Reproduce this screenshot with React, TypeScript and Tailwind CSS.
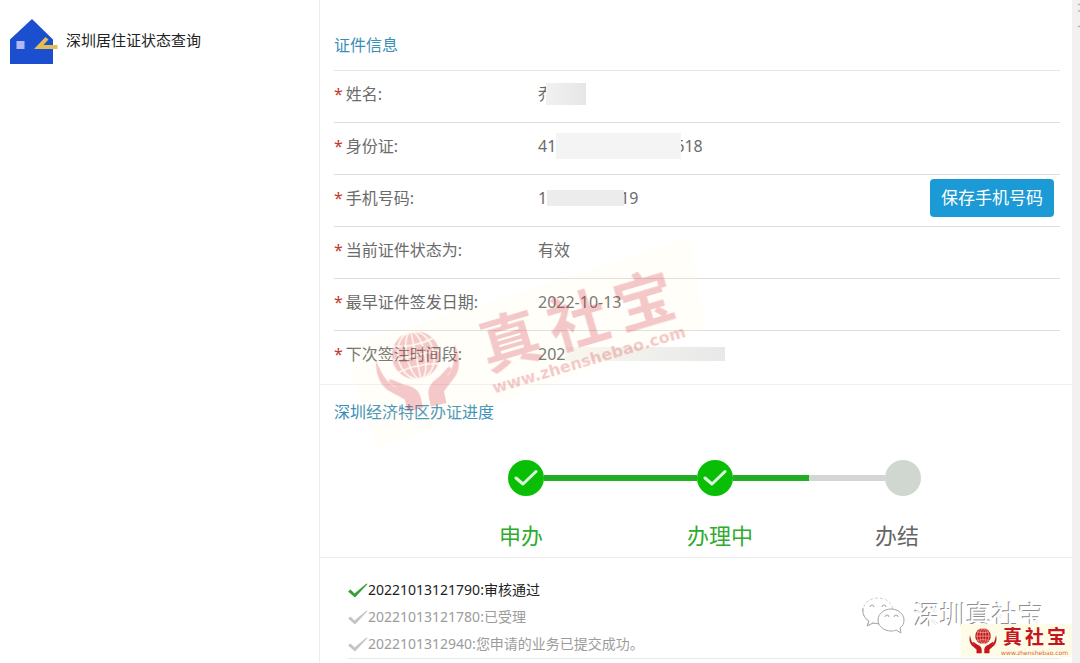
import type { ReactNode } from 'react';
import clsx from 'clsx';

type Field = {
  label: string;
  value: ReactNode;
  action?: ReactNode;
};

type LogEntry = {
  id: string;
  message: string;
};

const logs: LogEntry[] = [
  { id: '20221013121790', message: '审核通过' },
  { id: '20221013121780', message: '已受理' },
  { id: '2022101312940', message: '您申请的业务已提交成功。' },
];

const steps = [
  { name: '申办', done: true },
  { name: '办理中', done: true },
  { name: '办结', done: false },
];

const fields: Field[] = [
  {
    label: '姓名',
    value: (
      <>
        乔
        <Mask className="-ml-2 h-[22px] w-10 bg-gradient-to-r from-[#f1f1f1] to-[#e6e6e6]" />
      </>
    ),
  },
  {
    label: '身份证',
    value: (
      <>
        41
        <Mask className="z-10 -mr-1.5 h-[26px] w-[125px] bg-[#f4f4f4]" />
        618
      </>
    ),
  },
  {
    label: '手机号码',
    value: (
      <>
        1
        <Mask className="z-10 -mr-1 h-4 w-[77px] bg-[#ececec]" />
        19
      </>
    ),
    action: (
      <button
        type="button"
        className="mr-1.5 h-[38px] rounded bg-[#1b9ad6] px-[11px] text-[17px] leading-none text-white"
      >
        保存手机号码
      </button>
    ),
  },
  { label: '当前证件状态为', value: '有效' },
  { label: '最早证件签发日期', value: '2022-10-13' },
  {
    label: '下次签注时间段',
    value: (
      <>
        202
        <Mask className="h-3.5 w-40 bg-gradient-to-r from-[#f8f7f2] to-[#e8e8e8]" />
      </>
    ),
  },
];

export default function App() {
  return (
    <div className="flex min-h-screen bg-white font-['Noto_Sans','Noto_Sans_CJK_SC',sans-serif]">
      <aside className="w-80 shrink-0 border-r border-[#ececec] pt-[17px] pl-2.5">
        <a href="#status" className="flex items-start gap-2 text-[15px] leading-6 text-[#222]">
          <HouseIcon />
          <span className="mt-[11px]">深圳居住证状态查询</span>
        </a>
      </aside>

      <main className="relative min-w-0 flex-1">
        <section className="border-b border-[#f0f0f0] pt-5 pr-3 pb-px pl-3.5">
          <h2 className="flex h-[51px] items-center border-b border-[#e6e6e6] text-base text-[#3a8fb7]">证件信息</h2>
          <dl>
            {fields.map((f) => (
              <div
                key={f.label}
                className="flex h-[52px] items-center border-b border-[#dedede] pb-1.5 text-base text-[#6b6b6b] last:border-b-0"
              >
                <dt className="w-[204px] shrink-0">
                  <span className="mr-[3px] text-[#c0392b]">*</span>
                  {f.label}:
                </dt>
                <dd className="flex flex-1 items-center">{f.value}</dd>
                {f.action}
              </div>
            ))}
          </dl>
        </section>

        <section className="border-b border-[#ececec] pt-[15px] pb-1.5">
          <h2 className="pl-3.5 text-base leading-6 text-[#3a8fb7]">深圳经济特区办证进度</h2>
          <div className="mt-9 flex items-center pl-[188px]">
            <StepDot done />
            <span className="h-1.5 w-[153px] bg-[#22ae22]" />
            <StepDot done />
            <span className="h-1.5 w-[76px] bg-[#22ae22]" />
            <span className="h-1.5 w-[76px] bg-[#d3d6d2]" />
            <StepDot done={false} />
          </div>
          <ol className="mt-[23px] flex pl-[179px] text-[22px] leading-8">
            {steps.map((s) => (
              <li key={s.name} className={clsx('w-[188px]', s.done ? 'text-[#2fab2f]' : 'text-[#666]')}>
                {s.name}
              </li>
            ))}
          </ol>
        </section>

        <section className="pt-[18px] pr-3 pl-7">
          <ul className="border-b border-[#e8e8e8] pb-px text-sm">
            {logs.map((log, i) => (
              <li
                key={log.id}
                className={clsx('flex h-[27px] items-center', i === 0 ? 'text-[#222]' : 'text-[#9c9c9c]')}
              >
                <TickIcon className={i === 0 ? 'text-[#35a03a]' : 'text-[#c4c4c4]'} />
                {log.id}:{log.message}
              </li>
            ))}
          </ul>
        </section>

        <Watermark />
        <div className="pointer-events-none absolute right-7 bottom-7 flex items-center gap-2">
          <WechatIcon />
          <span className="text-[26px] leading-10 text-white [text-shadow:-1px_-1px_0_#8d8d8d]">深圳真社宝</span>
        </div>
        <BrandBadge />
      </main>

      <div className="w-2 shrink-0 bg-[#f1f1f1]">
        <svg width="8" height="30" viewBox="0 0 8 30" fill="none" stroke="#999">
          <path d="M6 5l2-1M6 11h2M6 27l2-1" />
        </svg>
      </div>
    </div>
  );
}

function Mask({ className }: { className: string }) {
  return <span className={clsx('relative inline-block shrink-0', className)} />;
}

function StepDot({ done }: { done: boolean }) {
  return (
    <span
      className={clsx('flex size-9 shrink-0 items-center justify-center rounded-full', done ? 'bg-[#09bf06]' : 'bg-[#d0d7d0]')}
    >
      {done && (
        <svg width="24" height="18" viewBox="0 0 24 18" fill="none" stroke="#dcf8dc" strokeWidth="3">
          <path d="M2 9l7 6L22 2.500" strokeLinecap="round" strokeLinejoin="round" />
        </svg>
      )}
    </span>
  );
}

function TickIcon({ className }: { className: string }) {
  return (
    <svg width="20" height="16" viewBox="0 0 20 16" className={clsx('shrink-0', className)} fill="currentColor">
      <path d="M0 9.500L2.500 7.500L6.500 11.500L18.500 1.500L19.500 2L7 15.500Z" />
    </svg>
  );
}

function HouseIcon() {
  return (
    <svg width="48" height="48" viewBox="0 0 48 48" className="shrink-0">
      <path d="M22 2L43 22.500V47H0V22.500Z" fill="#1b4fd0" />
      <rect x="6.500" y="24" width="8" height="8" fill="#b0b9f5" />
      <path d="M24 32L35.500 20L38.500 22.500L33.500 28H47.500V32Z" fill="#e3bd55" />
    </svg>
  );
}

function WechatIcon() {
  return (
    <svg width="44" height="38" viewBox="0 0 44 38" fill="#fff" stroke="#a5a5a5" strokeWidth="1">
      <path
        d="M16 2C7 2 1 8 1 15c0 4 2 8 6 10l-2 5 6-3c2 .6 4 1 6 .8C26 27 31 21 31 15 31 8 25 2 16 2Z"
        strokeDasharray="3 2"
        stroke="#d0d0d0"
      />
      <path d="M1 12c-1 6 2 11 6 13l-2 5 6-3 6 .8" fill="none" />
      <path d="M29 13c-7 0-13 5-13 11s6 11 13 11c2 0 3 0 5-1l5 3-1-5c3-2 4-5 4-8 0-6-6-11-13-11Z" />
      <g fill="none">
        <path d="M8 11a2 2 0 0 1 4 0M20 11a2 2 0 0 1 4 0M23 21a2 2 0 0 1 4 0M32 21a2 2 0 0 1 4 0" />
      </g>
    </svg>
  );
}

// globe held by two hands, drawn in an 84x80 box
function HandsLogo({ color, grid }: { color: string; grid: string }) {
  return (
    <g fill={color}>
      <circle cx="42" cy="25" r="24" />
      <g fill="none" stroke={grid} strokeWidth="1.500">
        <ellipse cx="42" cy="25" rx="9" ry="24" />
        <ellipse cx="42" cy="25" rx="18" ry="24" />
        <path d="M42 1V49M18 25H66M22 12Q42 17 62 12M22 38Q42 33 62 38" />
      </g>
      <path d="M2 22C-1 32 0 45 7 53L22 66V78H38V68C38 58 31 54 24 51L14 44C11 42 9 44 11 47L17 53C9 48 5 38 2 22Z" />
      <path d="M82 22C85 32 84 45 77 53L62 66V78H46V68C46 58 53 54 60 51L70 44C73 42 75 44 73 47L67 53C75 48 79 38 82 22Z" />
    </g>
  );
}

function Watermark() {
  return (
    <svg
      width="370"
      height="220"
      viewBox="0 0 370 220"
      className="pointer-events-none absolute top-[232px] left-8"
      aria-hidden="true"
    >
      <path d="M-10 116L338 6L354 96L24 216Z" fill="#fdf3c4" opacity="0.11" />
      <g opacity="0.24">
        <g transform="translate(67 138) rotate(-12) translate(-42 -40)">
          <HandsLogo color="#d0202f" grid="#fff6dc" />
        </g>
        <g
          transform="translate(158 109) rotate(-16.500)"
          fill="#d0202f"
          fontWeight="700"
          className="font-['Noto_Sans_CJK_SC',sans-serif]"
        >
          <g fontSize="60">
            <text x="-30" y="22">真</text>
            <text x="41" y="22">社</text>
            <text x="110" y="22">宝</text>
          </g>
          <text x="-30" y="46" fontSize="16" className="font-['DejaVu_Sans',sans-serif]">
            www.zhenshebao.com
          </text>
        </g>
      </g>
    </svg>
  );
}

function BrandBadge() {
  return (
    <div className="absolute right-0 bottom-1.5 flex items-center gap-1 bg-[#fefbe6] py-px pr-1 pl-2">
      <svg width="28" height="26" viewBox="0 0 84 80">
        <HandsLogo color="#c5161d" grid="#fbe3cf" />
      </svg>
      <div className="flex flex-col items-center text-[#c5161d]">
        <div className="flex gap-[3px] text-[19px] leading-6 font-bold">
          <span>真</span>
          <span>社</span>
          <span>宝</span>
        </div>
        <span className="font-['DejaVu_Sans',sans-serif] text-[6px] leading-[7px] text-[#d9642f]">
          www.zhenshebao.com
        </span>
      </div>
    </div>
  );
}
